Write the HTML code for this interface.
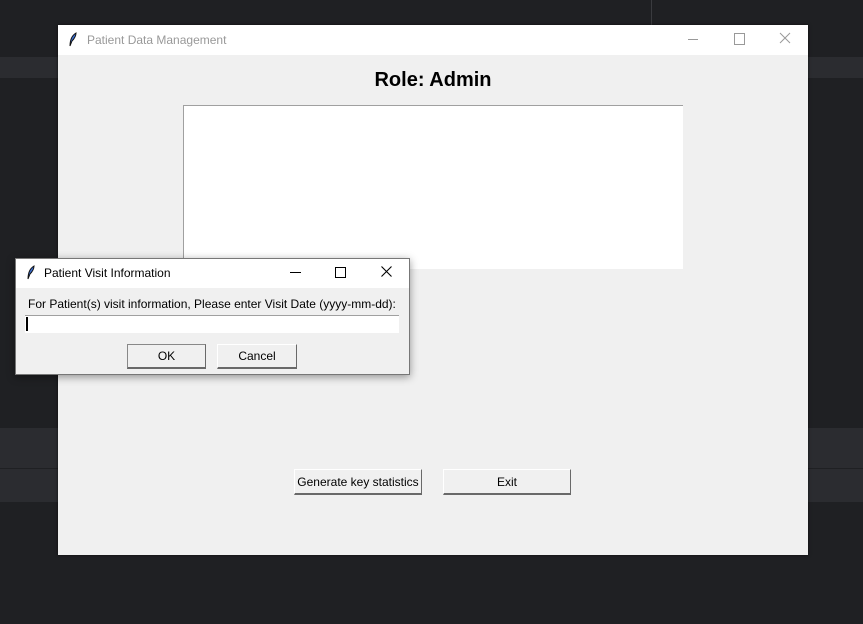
<!DOCTYPE html>
<html><head><style>
body{margin:0;width:863px;height:624px;background:#1f2023;position:relative;overflow:hidden;font-family:"Liberation Sans",sans-serif}
.a{position:absolute}
.btn{position:absolute;background:#f0f0f0;border-top:1px solid #fff;border-left:1px solid #fff;border-right:1px solid #696969;border-bottom:2px solid #696969;box-sizing:border-box;font-size:12px;text-align:center;color:#000}
</style></head><body>
<div class="a" style="left:0;top:57px;width:863px;height:21px;background:#2b2c30"></div>
<div class="a" style="left:0;top:428px;width:863px;height:40px;background:#2b2c30"></div>
<div class="a" style="left:0;top:469px;width:863px;height:33px;background:#2b2c30"></div>
<div class="a" style="left:651px;top:0;width:1px;height:25px;background:#3a3b3f"></div>

<div class="a" style="left:58px;top:25px;width:750px;height:530px;background:#f0f0f0;box-shadow:0 0 3px rgba(0,0,0,.6)">
 <div class="a" style="left:0;top:0;width:750px;height:30px;background:#fff"></div>
 <svg class="a" style="left:10px;top:7px" width="10" height="16"><path d="M8 1 C3 4 2 9 2 14 L4 9 C7 6 8 4 8 1Z" fill="#3b6fd1" stroke="#111" stroke-width="1"/></svg>
 <div class="a" style="left:29px;top:8px;font-size:12px;color:#999">Patient Data Management</div>
 <div class="a" style="left:630px;top:14px;width:10px;height:1px;background:#999"></div>
 <div class="a" style="left:676px;top:8px;width:9px;height:10px;border:1px solid #999"></div>
 <svg class="a" style="left:721px;top:7px" width="12" height="12"><path d="M1 1L11 11M11 1L1 11" stroke="#999" stroke-width="1"/></svg>
 <div class="a" style="left:0;top:44px;width:750px;text-align:center;font-size:20px;font-weight:bold;color:#000">Role: Admin</div>
 <div class="a" style="left:125px;top:80px;width:500px;height:164px;background:#fff;border-top:1px solid #a0a0a0;border-left:1px solid #a0a0a0;box-sizing:border-box"></div>
 <div class="btn" style="left:236px;top:444px;width:128px;height:26px;line-height:24px">Generate key statistics</div>
 <div class="btn" style="left:385px;top:444px;width:128px;height:26px;line-height:24px">Exit</div>
</div>

<div class="a" style="left:15px;top:258px;width:395px;height:117px;background:#f0f0f0;border:1px solid #777;box-sizing:border-box;box-shadow:0 2px 8px rgba(0,0,0,.4)">
 <div class="a" style="left:0;top:0;width:393px;height:29px;background:#fff"></div>
 <svg class="a" style="left:10px;top:6px" width="10" height="16"><path d="M8 1 C3 4 2 9 2 14 L4 9 C7 6 8 4 8 1Z" fill="#3b6fd1" stroke="#111" stroke-width="1"/></svg>
 <div class="a" style="left:28px;top:7px;font-size:12px;color:#000">Patient Visit Information</div>
 <div class="a" style="left:274px;top:13px;width:11px;height:1px;background:#000"></div>
 <div class="a" style="left:319px;top:8px;width:9px;height:9px;border:1px solid #000"></div>
 <svg class="a" style="left:365px;top:7px" width="11" height="11"><path d="M0.5 0.5L10.5 10.5M10.5 0.5L0.5 10.5" stroke="#000" stroke-width="1.1"/></svg>
 <div class="a" style="left:12px;top:38px;font-size:12px;color:#000">For Patient(s) visit information, Please enter Visit Date (yyyy-mm-dd):</div>
 <div class="a" style="left:9px;top:56px;width:374px;height:18px;background:#fff;border-top:1px solid #a0a0a0;box-sizing:border-box"></div>
 <div class="a" style="left:10px;top:58px;width:2px;height:14px;background:#000"></div>
 <div class="btn" style="left:111px;top:85px;width:79px;height:25px;line-height:23px;border-left-color:#888;border-top-color:#888">OK</div>
 <div class="btn" style="left:201px;top:85px;width:80px;height:25px;line-height:23px">Cancel</div>
</div>
</body></html>
